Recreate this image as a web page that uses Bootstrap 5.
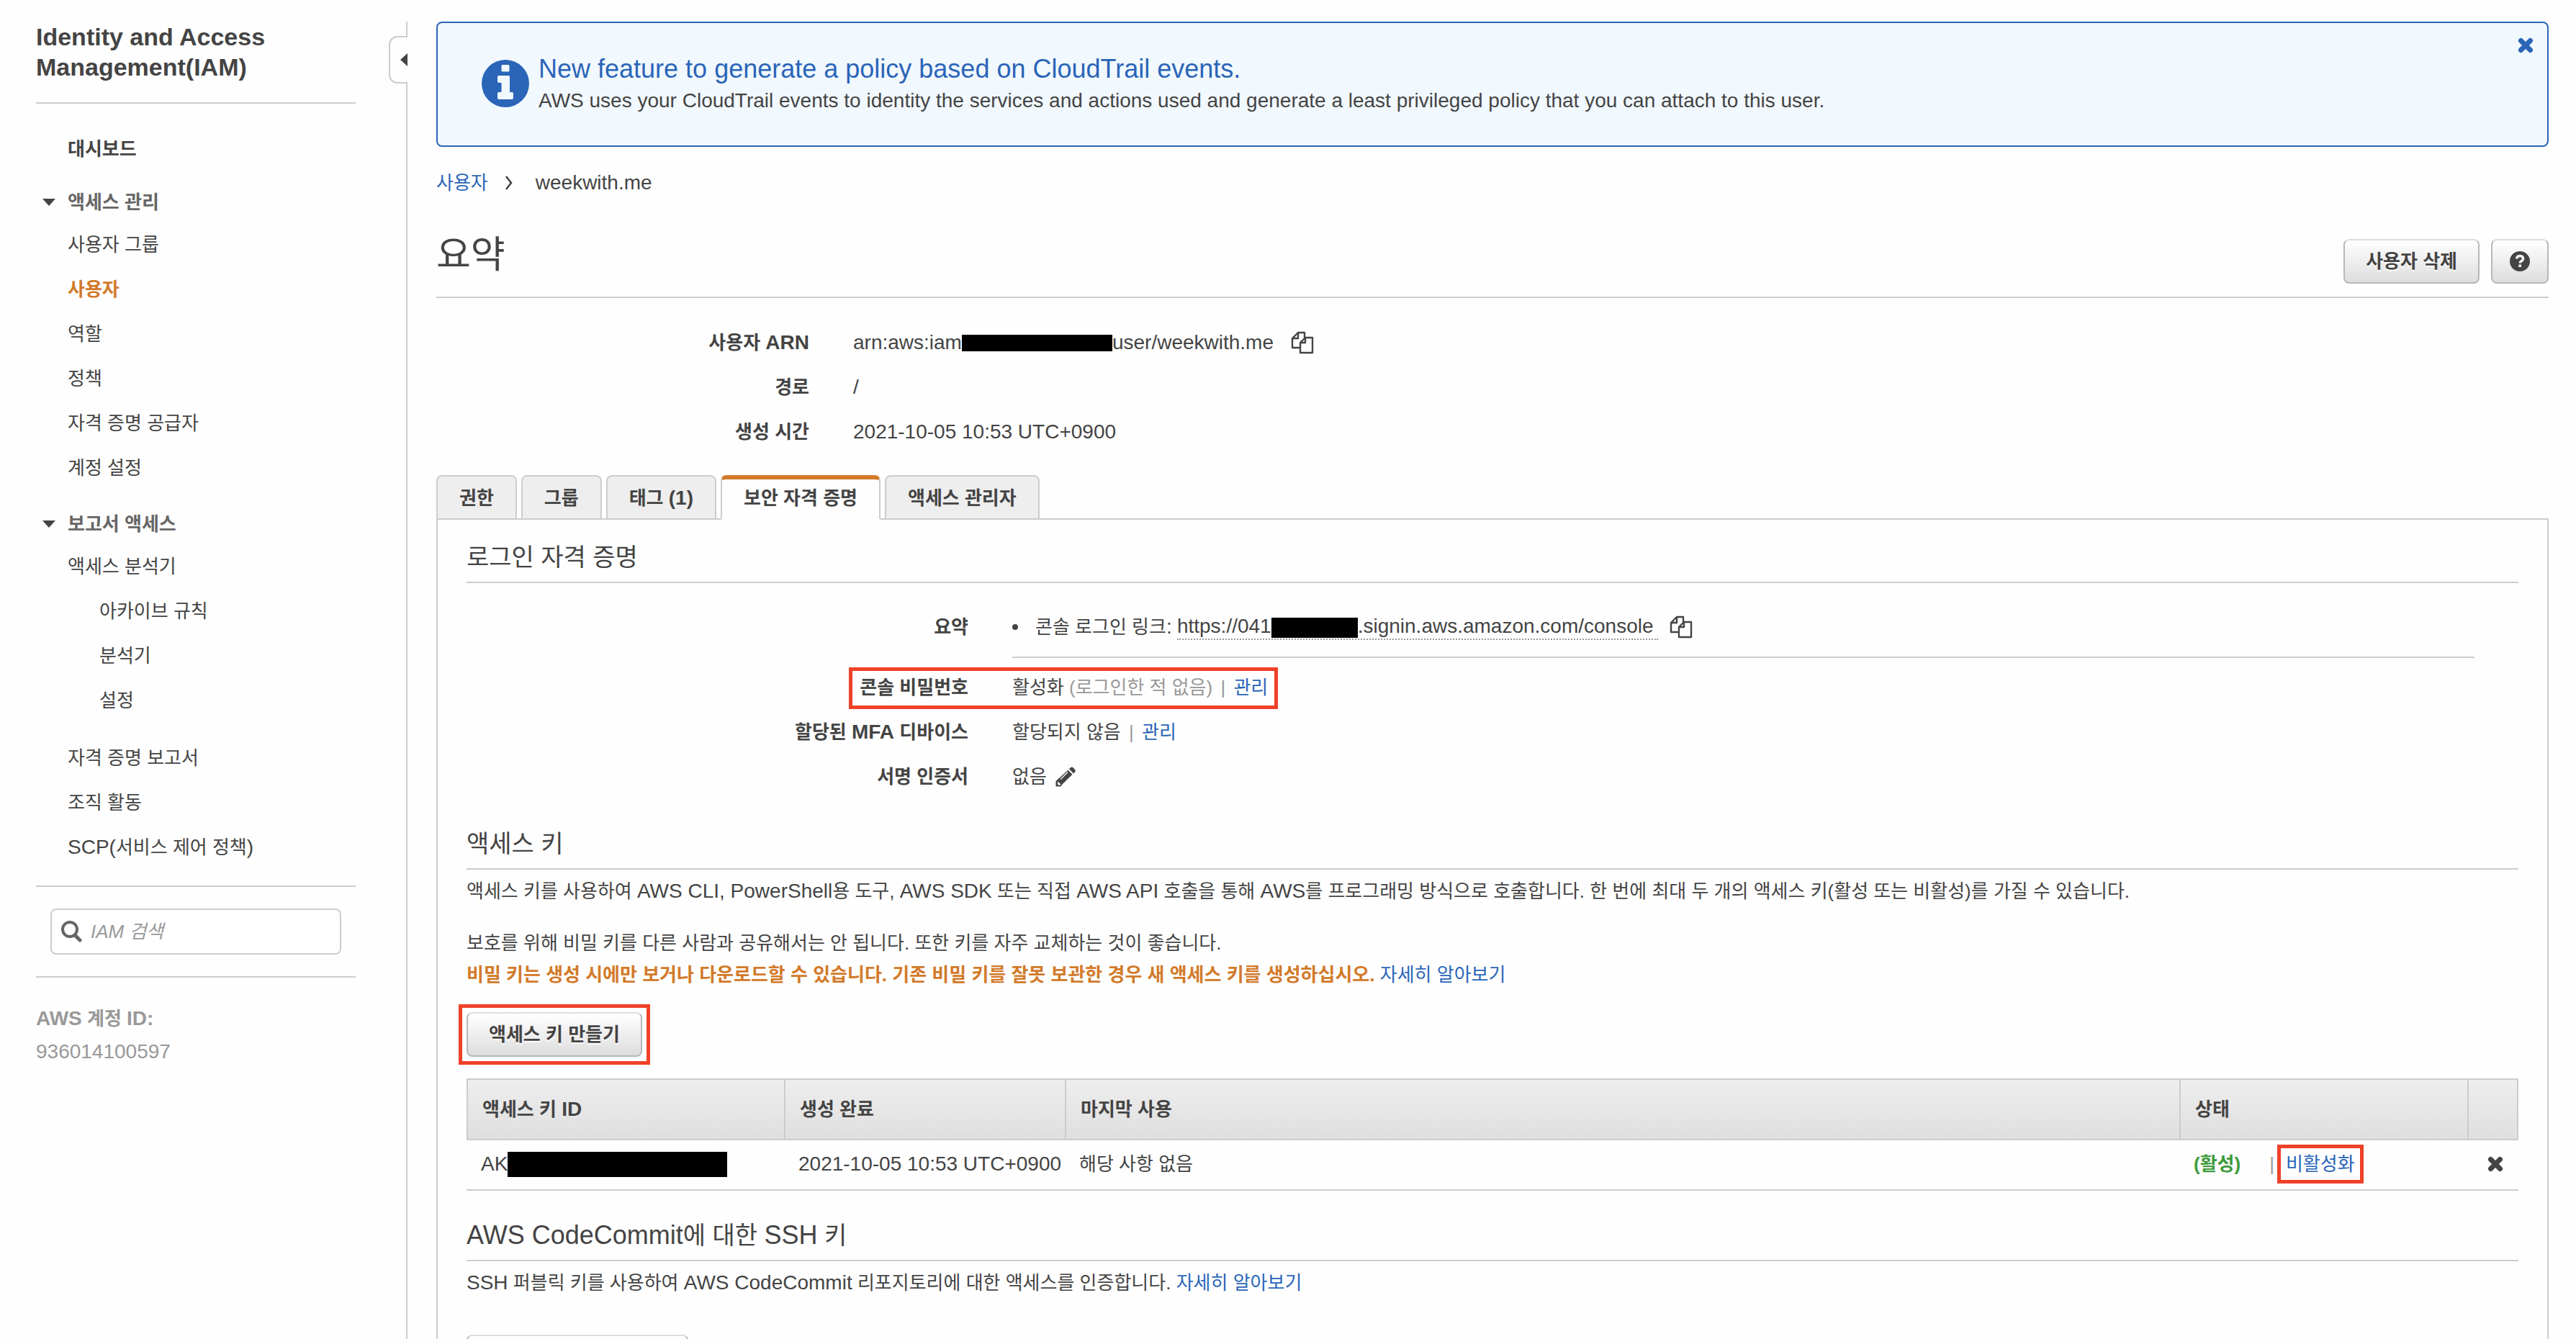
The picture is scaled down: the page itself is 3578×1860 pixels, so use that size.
<!DOCTYPE html>
<html lang="ko">
<head>
<meta charset="utf-8">
<meta name="viewport" content="width=device-width, initial-scale=1">
<title>IAM - weekwith.me</title>
<link href="https://cdn.jsdelivr.net/npm/bootstrap@5.3.0/dist/css/bootstrap.min.css" rel="stylesheet">
<style>
:root { --ink:#444; --line:#ccc; --blue:#2a65b8; --orange:#d27a2a; --callout:#ef4128; }
body { font-family:"Liberation Sans","Noto Sans CJK KR",sans-serif; font-size:26px; line-height:44px; color:var(--ink); background:#fefefe; }
a { color:var(--blue); text-decoration:none; }
.en { font-size:28px; }
.shell { height:100vh; overflow:hidden; }
.sidebar { width:566px; margin-top:30px; padding:0 70px 0 50px; border-right:2px solid var(--line); }
.sidebar h1 { font-size:34px; line-height:42px; font-weight:700; padding-bottom:28px; margin:0 0 32px; border-bottom:2px solid var(--line); }
.fold-handle { top:20px; right:-2px; width:26px; height:66px; padding:0; background:#fefefe; border:2px solid var(--line); border-right:0; border-radius:12px 0 0 12px; }
.menu a { display:block; color:var(--ink); line-height:62px; padding-left:44px; }
.menu .sub { margin-bottom:18px; }
.menu .sub a { padding-left:88px; }
.menu .current { color:var(--orange); font-weight:700; }
.menu .group { line-height:54px; font-weight:700; color:#666; padding-left:9px; gap:17px; margin-top:15px; background:none; border:0; }
.menu .group.second { margin-top:19px; }
.search-area { border:solid var(--line); border-width:2px 0; padding:30px 20px; margin-top:22px; }
.search-field { height:64px; border:2px solid var(--line); border-radius:8px; padding:0 14px 0 12px; gap:12px; background:#fff; }
.search-field input { border:0; outline:0; background:none; width:100%; padding:0; font-style:italic; color:var(--ink); line-height:44px; }
.search-field input::placeholder { color:#999; opacity:1; }
.account { color:#999; line-height:46px; margin-top:34px; }
.content { padding:30px 38px 0 40px; min-width:0; }
.notice { background:#f1f8fe; border:2px solid var(--blue); border-radius:8px; padding:40px 20px 42px 61px; gap:13px; }
.notice h2 { font-size:36px; line-height:48px; color:var(--blue); margin:0; font-weight:400; }
.notice p { font-size:28px; line-height:40px; }
.notice .dismiss { top:20px; right:19px; padding:0; border:0; background:none; line-height:0; }
.crumbs { line-height:40px; margin-top:30px; }
.page-head { margin-top:40px; padding-bottom:18px; border-bottom:2px solid var(--line); }
.page-head h1 { font-size:52px; line-height:80px; margin:0; font-weight:400; }
.btn-aws { height:62px; padding:0 29px; font-size:26px; line-height:44px; font-weight:700; color:var(--ink); background:linear-gradient(#fff,#ddd); border:2px solid #b8b8b8; border-top-color:#ddd; border-radius:8px; text-shadow:0 2px 0 #fff; }
.btn-help { padding:0 24px; }
.btn-upload { width:308px; margin-top:50px; }
.facts { margin:31px 0 29px; }
.fact { line-height:62px; gap:61px; }
.fact dt { width:518px; flex:none; text-align:right; }
.fact dd { margin:0; flex:1; }
.login-facts { margin:30px 0 38px; }
.login-facts .fact dt { width:697px; }
.sign-in { padding-bottom:10px; border-bottom:2px solid var(--line); margin:0 61px 10px 0 !important; }
.redacted { display:inline-block; background:#000; vertical-align:middle; }
.nav-tabs { --bs-nav-tabs-border-width:2px; --bs-nav-tabs-border-color:#ccc; --bs-nav-tabs-border-radius:8px; gap:6px; }
.nav-tabs .nav-link { height:62px; padding:8px 30px; line-height:44px; font-weight:700; color:var(--ink); background:#eee; border-color:var(--line); }
.nav-tabs .nav-link.active { color:var(--ink); background:#fefefe; border-color:var(--line) var(--line) #fefefe; border-top:6px solid var(--orange); padding-top:4px; }
.panel { border:2px solid var(--line); border-top:0; padding:28px 40px 200px; }
.panel h2 { font-size:34px; line-height:48px; font-weight:400; padding-bottom:10px; margin:0 0 8px; border-bottom:2px solid var(--line); }
.panel h2 .en { font-size:36px; }
.editable { border-bottom:2px dotted #999; line-height:34px; display:inline-block; padding-right:6px; }
.muted { color:#999; }
.divider { color:#999; margin:0 4px; }
.warn { color:var(--orange); font-weight:700; }
.callout-row { left:-227px; right:-14px; top:3px; height:58px; border:5px solid var(--callout); pointer-events:none; }
.callout-box { width:fit-content; margin-top:30px; outline:5px solid var(--callout); outline-offset:6px; }
.callout-link { margin-left:16px; line-height:30px; outline:5px solid var(--callout); outline-offset:7px; }
.keys { width:100%; table-layout:fixed; border-collapse:separate; border-spacing:0; margin:30px 0 38px; line-height:40px; }
.keys th { background:linear-gradient(#eee,#dfdfdf); border:solid var(--line); border-width:2px 0 2px 2px; padding:21px 20px; }
.keys th:last-child { border-right-width:2px; }
.keys td { border-bottom:2px solid var(--line); padding:13px 0 15px 20px; white-space:nowrap; }
.active-state { color:#3d9a3b; margin-right:40px; }
.icon-btn { border:0; background:none; padding:0; line-height:0; color:inherit; }
</style>
</head>
<body>
<svg class="d-none">
  <symbol id="copy" viewBox="0 0 32 32"><path d="M14 23H2V10l8-8h9v7M2 10h8V2M20 9h10v21H13V16zM13 16h7V9" fill="none" stroke="currentColor" stroke-width="2.4" stroke-linejoin="round"/></symbol>
  <symbol id="cross" viewBox="0 0 22 22"><path d="M4.500 4.500L17.500 17.500M17.500 4.500L4.500 17.500" stroke="currentColor" stroke-width="7" stroke-linecap="round"/></symbol>
  <symbol id="caret" viewBox="0 0 18 10"><path d="M0 0h18L9 10z" fill="#444"/></symbol>
</svg>
<div class="shell d-flex">
  <aside class="sidebar position-relative flex-shrink-0">
    <button class="fold-handle position-absolute d-flex align-items-center justify-content-end" aria-label="메뉴 접기"><svg width="10" height="18"><path d="M10 0v18L0 9z" fill="#444"/></svg></button>
    <h1>Identity and Access Management(IAM)</h1>
    <nav class="menu">
      <a href="#" class="fw-bold">대시보드</a>
      <button class="group d-flex align-items-center"><svg width="18" height="10"><use href="#caret"/></svg>액세스 관리</button>
      <a href="#">사용자 그룹</a>
      <a href="#" class="current">사용자</a>
      <a href="#">역할</a>
      <a href="#">정책</a>
      <a href="#">자격 증명 공급자</a>
      <a href="#">계정 설정</a>
      <button class="group second d-flex align-items-center"><svg width="18" height="10"><use href="#caret"/></svg>보고서 액세스</button>
      <a href="#">액세스 분석기</a>
      <div class="sub">
        <a href="#">아카이브 규칙</a>
        <a href="#">분석기</a>
        <a href="#">설정</a>
      </div>
      <a href="#">자격 증명 보고서</a>
      <a href="#">조직 활동</a>
      <a href="#"><span class="en">SCP(</span>서비스 제어 정책<span class="en">)</span></a>
    </nav>
    <div class="search-area">
      <label class="search-field d-flex align-items-center">
        <svg class="flex-shrink-0" width="30" height="30" viewBox="0 0 30 30" fill="none" stroke="#666" stroke-linecap="round"><circle cx="13" cy="12" r="10" stroke-width="4"/><path d="M20.500 20.500L27 27" stroke-width="5"/></svg>
        <input type="text" placeholder="IAM 검색" aria-label="IAM 검색">
      </label>
    </div>
    <div class="account"><b><span class="en">AWS</span> 계정 <span class="en">ID:</span></b><br><span class="en">936014100597</span></div>
  </aside>

  <main class="content flex-grow-1">
    <div class="notice d-flex align-items-center position-relative">
      <svg width="66" height="66" viewBox="0 0 66 66"><circle cx="33" cy="33" r="33" fill="#2a65b8"/><path d="M29 7h8q1.500 0 1.500 1.500v6.500q0 1.500-1.500 1.500h-8q-1.500 0-1.500-1.500V8.500Q27.500 7 29 7zM22 24q0-2 2-2h13.500q1.500 0 1.500 1.500V45h3q2 0 2 2v6q0 2-2 2H24q-2 0-2-2v-6q0-2 2-2h3.500V32H24q-2 0-2-2z" fill="#f1f8fe"/></svg>
      <div>
        <h2>New feature to generate a policy based on CloudTrail events.</h2>
        <p class="m-0">AWS uses your CloudTrail events to identity the services and actions used and generate a least privileged policy that you can attach to this user.</p>
      </div>
      <button class="dismiss position-absolute" aria-label="닫기"><svg width="22" height="22" color="#2a65b8"><use href="#cross"/></svg></button>
    </div>
    <nav class="crumbs d-flex align-items-center">
      <a href="#">사용자</a>
      <svg class="ms-4" width="10" height="20" viewBox="0 0 10 20"><path d="M1 1l7 9-7 9" fill="none" stroke="#444" stroke-width="2.500"/></svg>
      <span class="en ms-4 ps-2">weekwith.me</span>
    </nav>
    <div class="page-head d-flex align-items-end">
      <h1 class="me-auto">요약</h1>
      <button class="btn-aws">사용자 삭제</button>
      <button class="btn-aws btn-help ms-3" aria-label="도움말"><svg class="d-block" width="28" height="28" viewBox="0 0 28 28"><circle cx="14" cy="14" r="14" fill="#444"/><path d="M9.500 10.500Q10 6.500 14.200 6.500 18.500 6.800 18.500 10.300 18.500 12.300 16 13.700 14.200 14.700 14.200 16.500" fill="none" stroke="#eee" stroke-width="3.600"/><path d="M12.300 18.500h3.700v3.500h-3.700z" fill="#eee"/></svg></button>
    </div>

    <dl class="facts">
      <div class="fact d-flex"><dt>사용자 <span class="en">ARN</span></dt><dd class="en d-flex align-items-center">arn:aws:iam<span class="redacted" style="width:209px;height:23px"></span>user/weekwith.me<button class="icon-btn ms-4" aria-label="복사"><svg width="32" height="32"><use href="#copy"/></svg></button></dd></div>
      <div class="fact d-flex"><dt>경로</dt><dd class="en">/</dd></div>
      <div class="fact d-flex"><dt>생성 시간</dt><dd class="en">2021-10-05 10:53 UTC+0900</dd></div>
    </dl>

    <ul class="nav nav-tabs">
      <li class="nav-item"><a class="nav-link" href="#">권한</a></li>
      <li class="nav-item"><a class="nav-link" href="#">그룹</a></li>
      <li class="nav-item"><a class="nav-link" href="#">태그 <span class="en">(1)</span></a></li>
      <li class="nav-item"><a class="nav-link active" href="#">보안 자격 증명</a></li>
      <li class="nav-item"><a class="nav-link" href="#">액세스 관리자</a></li>
    </ul>
    <section class="panel">
      <h2>로그인 자격 증명</h2>
      <dl class="login-facts">
        <div class="fact d-flex"><dt>요약</dt><dd class="sign-in d-flex align-items-center">
          <svg width="8" height="8"><circle cx="4" cy="4" r="4" fill="#444"/></svg>
          <span class="ms-4">콘솔 로그인 링크<span class="en">:</span>&nbsp;</span>
          <span class="editable en">https://041<span class="redacted" style="width:120px;height:28px"></span>.signin.aws.amazon.com/console</span>
          <button class="icon-btn ms-3" aria-label="복사"><svg width="32" height="32"><use href="#copy"/></svg></button></dd></div>
        <div class="fact d-flex"><dt>콘솔 비밀번호</dt><dd><span class="position-relative d-inline-block">활성화 <span class="muted">(로그인한 적 없음)</span> <span class="divider">|</span> <a href="#">관리</a><span class="callout-row position-absolute"></span></span></dd></div>
        <div class="fact d-flex"><dt>할당된 <span class="en">MFA</span> 디바이스</dt><dd>할당되지 않음 <span class="divider">|</span> <a href="#">관리</a></dd></div>
        <div class="fact d-flex"><dt>서명 인증서</dt><dd class="d-flex align-items-center">없음<button class="icon-btn ms-2 ps-1" aria-label="편집"><svg width="28" height="28" viewBox="0 0 28 28"><path d="M19 3l2.500-2q1.500-1 3 .3L27 4q1.500 1.600.3 3L25 9.500zM17.500 4.700l6 6L9 25l-1.500 2.500H.5V20z" fill="#444"/><path d="M7 17.500L17 7.500" stroke="#fff" stroke-width="1.200"/><path d="M3 20.500l4.500 4L5 26l-2-2z" fill="#fff"/></svg></button></dd></div>
      </dl>

      <h2>액세스 키</h2>
      <p class="mb-4 pb-1">액세스 키를 사용하여 <span class="en">AWS CLI, PowerShell</span>용 도구, <span class="en">AWS SDK</span> 또는 직접 <span class="en">AWS API</span> 호출을 통해 <span class="en">AWS</span>를 프로그래밍 방식으로 호출합니다. 한 번에 최대 두 개의 액세스 키(활성 또는 비활성)를 가질 수 있습니다.</p>
      <p class="m-0">보호를 위해 비밀 키를 다른 사람과 공유해서는 안 됩니다. 또한 키를 자주 교체하는 것이 좋습니다.<br><span class="warn">비밀 키는 생성 시에만 보거나 다운로드할 수 있습니다. 기존 비밀 키를 잘못 보관한 경우 새 액세스 키를 생성하십시오.</span> <a href="#">자세히 알아보기</a></p>
      <div class="callout-box"><button class="btn-aws d-block">액세스 키 만들기</button></div>

      <table class="keys">
        <colgroup><col style="width:441px"><col style="width:390px"><col><col style="width:400px"><col style="width:71px"></colgroup>
        <thead><tr><th>액세스 키 <span class="en">ID</span></th><th>생성 완료</th><th>마지막 사용</th><th>상태</th><th></th></tr></thead>
        <tbody><tr>
          <td><span class="en d-flex align-items-center">AK<span class="redacted" style="width:305px;height:35px"></span></span></td>
          <td class="en">2021-10-05 10:53 UTC+0900</td>
          <td>해당 사항 없음</td>
          <td><span class="d-flex align-items-center"><b class="active-state">(활성)</b><span class="muted">|</span><a href="#" class="callout-link">비활성화</a></span></td>
          <td><button class="icon-btn d-block ms-2" aria-label="삭제"><svg width="22" height="22"><use href="#cross"/></svg></button></td>
        </tr></tbody>
      </table>

      <h2><span class="en">AWS CodeCommit</span>에 대한 <span class="en">SSH</span> 키</h2>
      <p class="m-0"><span class="en">SSH</span> 퍼블릭 키를 사용하여 <span class="en">AWS CodeCommit</span> 리포지토리에 대한 액세스를 인증합니다. <a href="#">자세히 알아보기</a></p>
      <button class="btn-aws btn-upload d-block" aria-label="업로드"></button>
    </section>
  </main>
</div>
<script src="https://cdn.jsdelivr.net/npm/bootstrap@5.3.0/dist/js/bootstrap.bundle.min.js"></script>
</body>
</html>
